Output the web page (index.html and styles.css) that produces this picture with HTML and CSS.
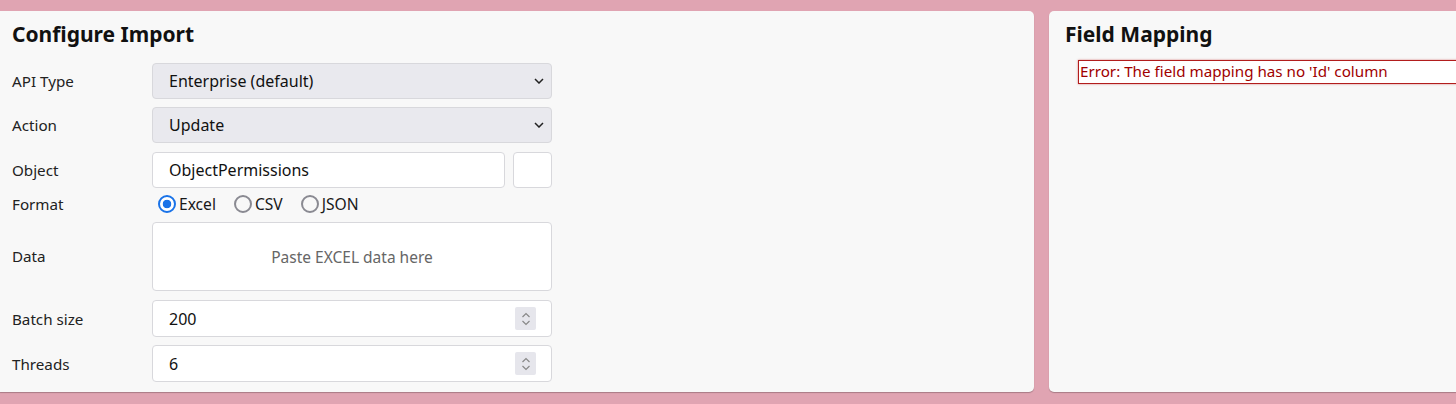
FILE: index.html
```html
<!DOCTYPE html>
<html>
<head>
<meta charset="utf-8">
<link rel="stylesheet" href="styles.css">
</head>
<body>
<div class="page">
  <section class="panel config">
    <h2 class="title">Configure Import</h2>
    <div class="form">
      <div class="row">
        <label class="lbl">API Type</label>
        <div class="select"><span>Enterprise (default)</span>
          <svg class="chev" width="10" height="6" viewBox="0 0 10 6"><path d="M1 1l4 4 4-4" fill="none" stroke="#222" stroke-width="1.5"/></svg>
        </div>
      </div>
      <div class="row">
        <label class="lbl">Action</label>
        <div class="select"><span>Update</span>
          <svg class="chev" width="10" height="6" viewBox="0 0 10 6"><path d="M1 1l4 4 4-4" fill="none" stroke="#222" stroke-width="1.5"/></svg>
        </div>
      </div>
      <div class="row">
        <label class="lbl">Object</label>
        <div class="objwrap">
          <div class="input grow">ObjectPermissions</div>
          <div class="input small"></div>
        </div>
      </div>
      <div class="row fmt">
        <label class="lbl">Format</label>
        <div class="radios">
          <span class="radio on"><i></i>Excel</span>
          <span class="radio"><i></i>CSV</span>
          <span class="radio"><i></i>JSON</span>
        </div>
      </div>
      <div class="row data">
        <label class="lbl">Data</label>
        <div class="textarea">Paste EXCEL data here</div>
      </div>
      <div class="row">
        <label class="lbl">Batch size</label>
        <div class="input num"><span>200</span>
          <span class="spin"><svg width="10" height="16" viewBox="0 0 10 16"><path d="M1.5 6l3.5-3.5 3.5 3.5M1.5 10l3.5 3.5 3.5-3.5" fill="none" stroke="#888" stroke-width="1.2"/></svg></span>
        </div>
      </div>
      <div class="row">
        <label class="lbl">Threads</label>
        <div class="input num"><span>6</span>
          <span class="spin"><svg width="10" height="16" viewBox="0 0 10 16"><path d="M1.5 6l3.5-3.5 3.5 3.5M1.5 10l3.5 3.5 3.5-3.5" fill="none" stroke="#888" stroke-width="1.2"/></svg></span>
        </div>
      </div>
    </div>
  </section>
  <section class="panel mapping">
    <h2 class="title">Field Mapping</h2>
    <div class="error">Error: The field mapping has no 'Id' column</div>
  </section>
</div>
</body>
</html>
```
FILE: styles.css
```css
html, body {
  margin: 0;
  padding: 0;
  background: #e0a4b2;
  overflow: hidden;
}
body {
  font-family: "Noto Sans", "Open Sans", sans-serif;
  color: #181818;
}
.page {
  display: flex;
  gap: 15px;
  padding-top: 11px;
  height: 404px;
  box-sizing: border-box;
  width: 100%;
}
.panel {
  background: #f8f8f8;
  border-radius: 5px;
  box-shadow: 0 1px 1px rgba(0,0,0,0.25);
  height: 381px;
  box-sizing: border-box;
}
.config {
  width: 1034px;
  flex: none;
  border-top-left-radius: 0;
  border-bottom-left-radius: 0;
  padding: 0 12px;
}
.mapping {
  flex: 1;
  min-width: 0;
  border-top-right-radius: 0;
  border-bottom-right-radius: 0;
  padding: 0 0 0 16px;
  overflow: hidden;
}
.title {
  margin: 0;
  font-size: 21px;
  font-weight: 700;
  line-height: 24px;
  padding-top: 11px;
  height: 52px;
  box-sizing: border-box;
  color: #111;
}
.form {
  display: flex;
  flex-direction: column;
  gap: 8px;
}
.row {
  display: flex;
  align-items: center;
}
.lbl {
  width: 140px;
  flex: none;
  font-size: 15.2px;
  color: #222;
}
.select, .input, .textarea {
  width: 400px;
  height: 36px;
  box-sizing: border-box;
  border: 1px solid #d8d8dc;
  border-radius: 4px;
  display: flex;
  align-items: center;
  font-size: 16px;
  padding: 0 16px;
  color: #111;
}
.select {
  background: #e9e9ee;
  justify-content: space-between;
  padding-right: 7px;
}
.input { background: #fff; }
.objwrap {
  display: flex;
  gap: 8px;
  width: 400px;
  margin-top: 1px;
}
.objwrap .grow { flex: 1; width: auto; }
.objwrap .small { width: 39px; padding: 0; }
.fmt { height: 20px; margin-top: -2px; margin-bottom: -1px; }
.radios {
  display: flex;
  gap: 18px;
  padding-left: 6px;
  font-size: 15.6px;
}
.radio {
  display: flex;
  align-items: center;
  gap: 3px;
}
.radio i {
  display: block;
  width: 18px;
  height: 18px;
  box-sizing: border-box;
  border: 2px solid #8a8a92;
  border-radius: 50%;
}
.radio.on i {
  border-color: #1a73e8;
  background: radial-gradient(circle, #1a73e8 0 4px, #fff 4.6px);
}
.data .textarea {
  height: 69px;
  justify-content: center;
  background: #fff;
  color: #666;
  font-size: 15.5px;
  margin-top: 1px;
}
.num {
  justify-content: space-between;
  padding-right: 15px;
  height: 37px;
}
.data + .row { margin-top: 1px; }
.spin {
  display: flex;
  align-items: center;
  justify-content: center;
  width: 21px;
  height: 23px;
  background: #e6e6ec;
  border-radius: 2px;
}
.error {
  margin-left: 13px;
  margin-top: -3px;
  width: 520px;
  height: 24px;
  box-sizing: border-box;
  border: 1px solid #b21d1d;
  box-shadow: 0 0 2px rgba(180,0,0,0.5);
  background: #fff;
  color: #a00000;
  font-size: 15.2px;
  line-height: 21px;
  padding-left: 1px;
}
```
